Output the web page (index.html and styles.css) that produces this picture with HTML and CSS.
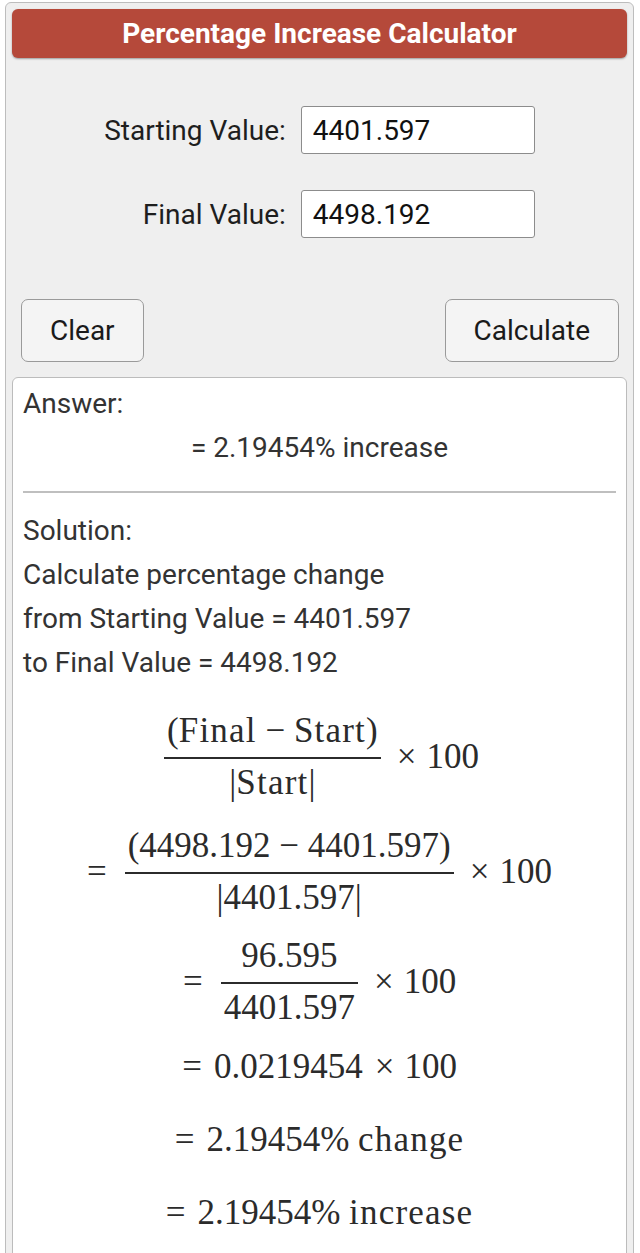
FILE: index.html
```html
<!DOCTYPE html>
<html lang="en">
<head>
  <meta charset="UTF-8">
  <meta name="viewport" content="width=device-width, initial-scale=1.0">
  <title>Percentage Increase Calculator</title>
  <link rel="stylesheet" href="styles.css">
</head>
<body>
  <div class="calc">
    <div class="calc-title">Percentage Increase Calculator</div>

    <form class="calc-form">
      <div class="fields">
        <label for="start">Starting Value:</label>
        <input type="text" id="start" value="4401.597" />
        <label for="final">Final Value:</label>
        <input type="text" id="final" value="4498.192" />
      </div>
      <div class="actions">
        <button type="reset" class="btn">Clear</button>
        <button type="submit" class="btn">Calculate</button>
      </div>
    </form>

    <div class="answer">
      <p>Answer:</p>
      <p class="result">= 2.19454% increase</p>
      <hr>
      <p>Solution:<br>Calculate percentage change<br>from Starting Value = 4401.597<br>to Final Value = 4498.192</p>

      <div class="math">
        <div class="eq eq-frac first">
          <span class="frac"><span class="num">(<span class="tx">Final</span> − <span class="tx">Start</span>)</span><span class="den">|<span class="tx">Start</span>|</span></span>
          <span class="bin">×</span><span>100</span>
        </div>
        <div class="eq eq-frac">
          <span class="rel">=</span>
          <span class="frac"><span class="num">(4498.192 − 4401.597)</span><span class="den">|4401.597|</span></span>
          <span class="bin">×</span><span>100</span>
        </div>
        <div class="eq eq-frac tight">
          <span class="rel">=</span>
          <span class="frac"><span class="num">96.595</span><span class="den">4401.597</span></span>
          <span class="bin">×</span><span>100</span>
        </div>
        <div class="eq after-frac"><span class="rel">=</span><span>0.0219454</span><span class="bin">×</span><span>100</span></div>
        <div class="eq"><span class="rel">=</span><span>2.19454% <span class="tx">change</span></span></div>
        <div class="eq"><span class="rel">=</span><span>2.19454% <span class="tx">increase</span></span></div>
      </div>
    </div>
  </div>
</body>
</html>
```

FILE: styles.css
```css
body { margin: 0; background: #fff; font-family: Roboto, "Liberation Sans", sans-serif; color: #222; }

.calc { margin: 2px 6px 0 5px; padding: 6px 6px 40px; background: #efefef; border: 1px solid #bdbdbd; border-radius: 6px; }
.calc-title { height: 49px; line-height: 49px; text-align: center; background: #b5493a; color: #fff; font-size: 28px; font-weight: bold; border-radius: 6px; box-shadow: 0 1px 2px rgba(0,0,0,0.35); }

.fields { display: grid; grid-template-columns: auto 234px; justify-content: center; align-items: center; column-gap: 15px; row-gap: 36px; margin-top: 48px; }
.fields label { text-align: right; font-size: 28px; color: #1e1e1e; }
.fields input { box-sizing: border-box; width: 234px; height: 48px; padding: 0 11px; font: 28px Roboto, sans-serif; color: #111; background: #fff; border: 1px solid #8c8c8c; border-radius: 3px; }

.actions { display: flex; justify-content: space-between; margin-top: 61px; padding: 0 8px 0 9px; }
.btn { padding: 16px 28px; font: 28px/29px Roboto, sans-serif; color: #1a1a1a; background: #f4f4f4; border: 1px solid #9a9a9a; border-radius: 7px; }

.answer { margin-top: 15px; padding: 4px 10px 30px; background: #fff; border: 1px solid #bcbcbc; border-radius: 6px; color: #333; font-size: 28px; line-height: 44px; }
.answer p { margin: 0; }
.answer .result { text-align: center; }
.answer hr { margin: 21px 0 16px; border: 0; border-top: 2px solid #bfbfbf; }

.math { font-family: "Liberation Serif", "Times New Roman", serif; font-size: 35px; color: #2b2b2b; }
.tx { letter-spacing: 1.2px; }
.eq { display: flex; justify-content: center; align-items: center; height: 73px; line-height: 40px; }
.eq-frac { height: 92px; margin-top: 23px; }
.eq-frac.first { margin-top: 26px; }
.eq-frac.tight { margin-top: 18px; }
.eq.after-frac { margin-top: 2px; }
.frac { display: inline-flex; flex-direction: column; align-items: stretch; text-align: center; padding: 0 4px; }
.frac .num { padding: 0 3px 6px; border-bottom: 2px solid #2b2b2b; }
.frac .den { padding: 4px 3px 0; }
.bin { margin: 0 10px 0 12px; }
.rel { margin-right: 12px; }
.eq-frac .rel { margin-right: 14px; }
```
